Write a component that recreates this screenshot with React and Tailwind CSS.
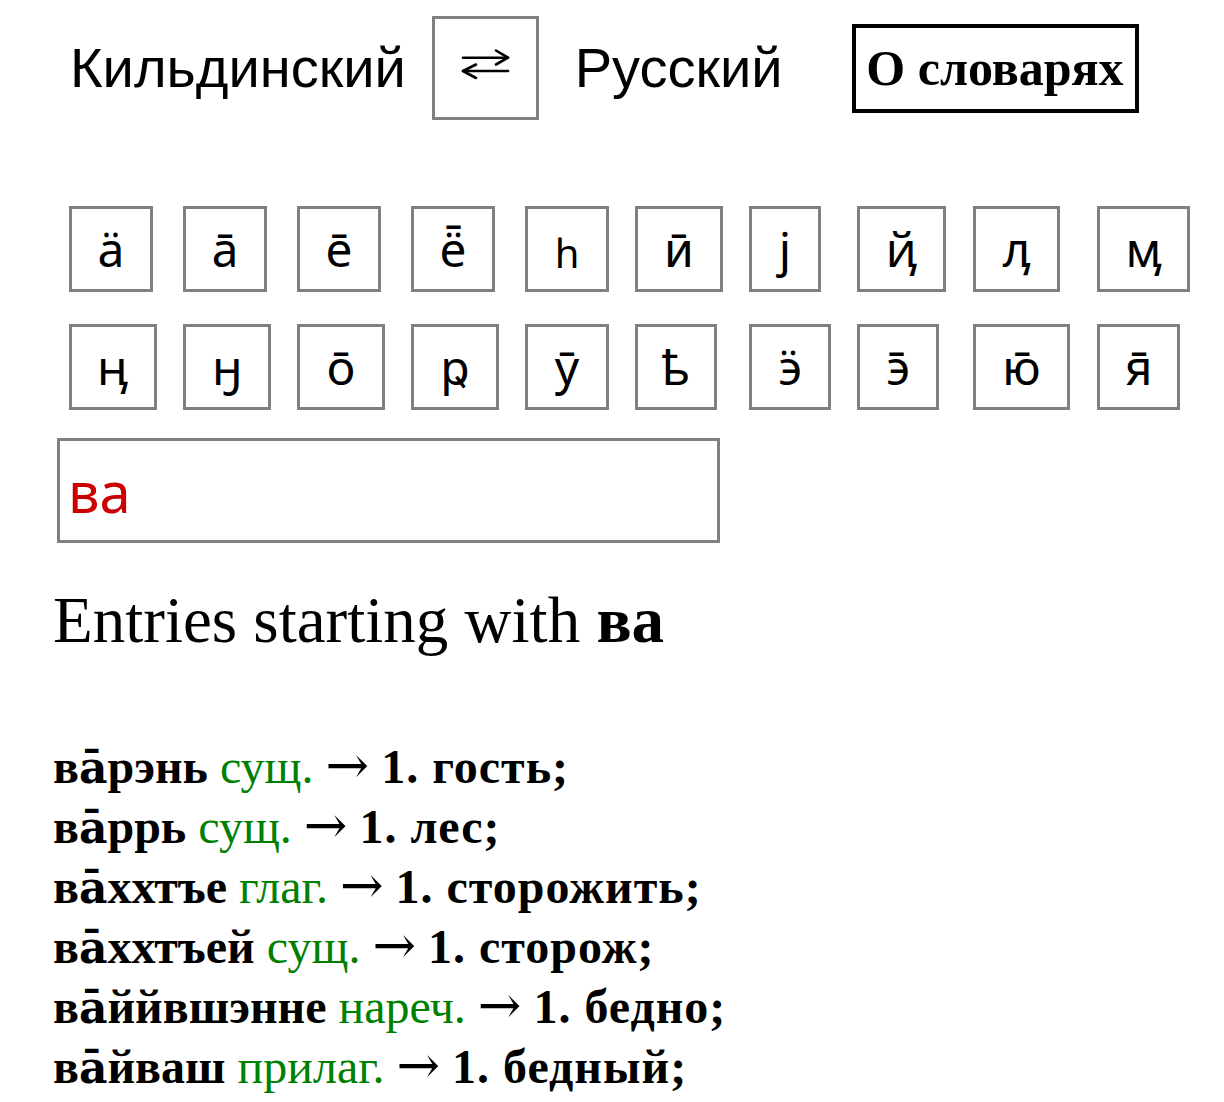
import React from "react";

const row1 = [
  { c: "ӓ", w: 84 },
  { c: "а̄", w: 84 },
  { c: "е̄", w: 84 },
  { c: "ё̄", w: 84 },
  { c: "һ", w: 84, small: true },
  { c: "ӣ", w: 88 },
  { c: "ј", w: 72 },
  { c: "ҋ", w: 89 },
  { c: "ӆ", w: 87 },
  { c: "ӎ", w: 93 },
];
const row2 = [
  { c: "ӊ", w: 88 },
  { c: "ӈ", w: 88 },
  { c: "о̄", w: 88 },
  { c: "ҏ", w: 88 },
  { c: "ӯ", w: 84 },
  { c: "ҍ", w: 82 },
  { c: "ӭ", w: 82 },
  { c: "э̄", w: 82 },
  { c: "ю̄", w: 97 },
  { c: "я̄", w: 83 },
];

const entries = [
  { a: "в", b: "рэнь", p: "сущ.", t: "1. гость;" },
  { a: "в", b: "ррь", p: "сущ.", t: "1. лес;" },
  { a: "в", b: "ххтъе", p: "глаг.", t: "1. сторожить;" },
  { a: "в", b: "ххтъей", p: "сущ.", t: "1. сторож;" },
  { a: "в", b: "ййвшэнне", p: "нареч.", t: "1. бедно;" },
  { a: "в", b: "йваш", p: "прилаг.", t: "1. бедный;" },
];

function Key({ c, w, small }) {
  return (
    <button
      type="button"
      style={{ width: w }}
      className={
        "h-[86px] border-[3px] border-[#808080] bg-white flex items-center justify-center leading-none text-black font-['Noto_Sans','DejaVu_Sans',sans-serif] " +
        (small ? "text-[40px] pt-[8px]" : "text-[48px]")
      }
    >
      {c}
    </button>
  );
}

export default function App() {
  return (
    <div className="w-[1224px] h-[1102px] bg-white overflow-hidden text-black">
      {/* Top bar */}
      <div className="flex items-center pt-[16px] pl-[70px]">
        <span className="text-[56px] leading-none font-['Liberation_Sans',Arial,sans-serif]">Кильдинский</span>
        <button
          type="button"
          className="ml-[26px] w-[107px] h-[104px] border-[3px] border-[#808080] bg-white flex items-center justify-center"
        >
          <svg width="55" height="40" viewBox="460 48 55 40" fill="none" stroke="#000" strokeWidth="2.6" strokeLinecap="round" strokeLinejoin="round">
            <path d="M465 57.7 H510" />
            <path d="M498 50.5 L510 57.7 L498 64.5" />
            <path d="M465 71 H510" />
            <path d="M478 64.5 L465 71 L478 78" />
          </svg>
        </button>
        <span className="ml-[36px] text-[56px] leading-none font-['Liberation_Sans',Arial,sans-serif]">Русский</span>
        <button
          type="button"
          className="ml-[69px] w-[287px] h-[89px] border-[4px] border-black bg-white flex items-center justify-center text-[50px] leading-none font-bold font-['Liberation_Serif','Times_New_Roman',serif]"
        >
          О словарях
        </button>
      </div>

      {/* Keyboard */}
      <div className="mt-[86px] pl-[69px] grid grid-cols-[114px_114px_114px_114px_110px_114px_108px_116px_124px_auto] gap-y-[32px] justify-items-start">
        {row1.map((k, i) => (
          <Key key={"a" + i} c={k.c} w={k.w} small={k.small} />
        ))}
        {row2.map((k, i) => (
          <Key key={"b" + i} c={k.c} w={k.w} />
        ))}
      </div>

      {/* Input */}
      <div className="mt-[28px] ml-[57px] w-[663px] h-[105px] border-[3px] border-[#808080] flex items-center pl-[8px]">
        <span className="text-[56px] leading-none text-[#cc0000] font-['Noto_Sans','DejaVu_Sans',sans-serif]">ва</span>
      </div>

      {/* Heading */}
      <h2 className="mt-[45px] ml-[53px] text-[65px] leading-none font-normal font-['Liberation_Serif','Times_New_Roman',serif]">
        Entries starting with <b className="font-bold">ва</b>
      </h2>

      {/* Entries */}
      <div className="mt-[84px] ml-[53px] flex flex-col text-[48px] leading-[60px] font-bold font-['Liberation_Serif','Times_New_Roman',serif]">
        {entries.map((e, i) => (
          <div key={i} className="h-[60px] whitespace-nowrap">
            <span>
              {e.a}
              <span className="font-['DejaVu_Serif',serif] text-[44px] leading-none">а̄</span>
              {e.b}
            </span>{" "}
            <span className="font-normal text-[#008000]">{e.p}</span>{" "}
            <span className="font-normal text-[52px] leading-none font-['DejaVu_Serif',serif]">→</span>{" "}
            <span className="tracking-[1px]">{e.t}</span>
          </div>
        ))}
      </div>
    </div>
  );
}
